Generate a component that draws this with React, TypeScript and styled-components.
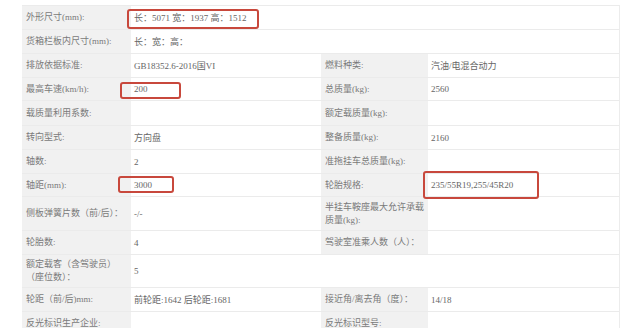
import styled, { createGlobalStyle } from 'styled-components';

const GlobalStyle = createGlobalStyle`
  html, body {
    margin: 0;
    padding: 0;
    background: #ffffff;
  }
  body {
    font-family: "Liberation Serif", "Noto Sans CJK SC", serif;
  }
`

type Spec = {
    h: number;
    l1: string;
    v1?: string;
    l2?: string;
    v2?: string;
};

// row heights are taken from the screenshot, label text may contain "\n"
const rows: Spec[] = [
    { h: 24, l1: '外形尺寸(mm):', v1: '长：5071 宽：1937 高：1512' },
    { h: 24, l1: '货箱栏板内尺寸(mm):', v1: '长：宽：高：' },
    { h: 24, l1: '排放依据标准:', v1: 'GB18352.6-2016国VI', l2: '燃料种类:', v2: '汽油/电混合动力' },
    { h: 23, l1: '最高车速(km/h):', v1: '200', l2: '总质量(kg):', v2: '2560' },
    { h: 25, l1: '载质量利用系数:', v1: '', l2: '额定载质量(kg):', v2: '' },
    { h: 24, l1: '转向型式:', v1: '方向盘', l2: '整备质量(kg):', v2: '2160' },
    { h: 24, l1: '轴数:', v1: '2', l2: '准拖挂车总质量(kg):', v2: '' },
    { h: 23, l1: '轴距(mm):', v1: '3000', l2: '轮胎规格:', v2: '235/55R19,255/45R20' },
    { h: 34, l1: '侧板弹簧片数（前/后）：', v1: '-/-', l2: '半挂车鞍座最大允许承载\n质量(kg):', v2: '' },
    { h: 24, l1: '轮胎数:', v1: '4', l2: '驾驶室准乘人数（人）：', v2: '' },
    { h: 33, l1: '额定载客（含驾驶员）\n（座位数）：', v1: '5' },
    { h: 24, l1: '轮距（前/后)mm:', v1: '前轮距:1642 后轮距:1681', l2: '接近角/离去角（度）：', v2: '14/18' },
    { h: 24, l1: '反光标识生产企业:', v1: '', l2: '反光标识型号:', v2: '' },
];

const marks = [
    { x: 127, y: 9, w: 132, h: 20 },
    { x: 120, y: 82, w: 61, h: 17 },
    { x: 118, y: 176, w: 56, h: 17 },
    { x: 423, y: 171, w: 116, h: 28 },
];

function Lines({ text }: { text: string }) {
    const parts = text.split('\n');
    return <Text>
        {parts.map((p, i) => <span key={i}>{p}{i < parts.length - 1 && <br />}</span>)}
    </Text>
}

export default function App() {
    return <Page>
        <GlobalStyle />
        <Table>
            {rows.map((r, i) => (
                <Row key={i} $h={r.h}>
                    <Label><Lines text={r.l1} /></Label>
                    <Value>{r.v1}</Value>
                    {r.l2 !== undefined ? <>
                        <Label><Lines text={r.l2} /></Label>
                        <Value>{r.v2}</Value>
                    </> : <Blank />}
                </Row>
            ))}
        </Table>
        {marks.map((m, i) => <Mark key={i} $x={m.x} $y={m.y} $w={m.w} $h={m.h} />)}
    </Page>
}

const Page = styled.div`
  position: relative;
  width: 640px;
  height: 328px;
  overflow: hidden;
  padding: 5px 0 0 22px;
  box-sizing: border-box;
`

const Table = styled.div`
  width: 598px;
  border-right: 1px solid #ececec;
  box-sizing: border-box;
`

const Row = styled.div<{ $h: number }>`
  display: grid;
  grid-template-columns: 109px 190px 107px 1fr;
  height: ${p => p.$h}px;
  border-top: 1px solid #ebebeb;
  box-sizing: border-box;
`

const Label = styled.div`
  display: flex;
  align-items: center;
  padding: 0 0 0 4px;
  background: #f1f1f1;
  color: #7a7a7a;
  font-size: 9px;
  white-space: nowrap;
`

const Text = styled.div`
  line-height: 13px;
`

const Value = styled.div`
  display: flex;
  align-items: center;
  padding: 0 0 0 3px;
  color: #666;
  font-size: 9px;
  white-space: nowrap;
`

const Blank = styled.div`
  grid-column: span 2;
`

const Mark = styled.div<{ $x: number; $y: number; $w: number; $h: number }>`
  position: absolute;
  left: ${p => p.$x}px;
  top: ${p => p.$y}px;
  width: ${p => p.$w}px;
  height: ${p => p.$h}px;
  border: 2px solid #c8483c;
  border-radius: 3px;
  box-sizing: border-box;
`
